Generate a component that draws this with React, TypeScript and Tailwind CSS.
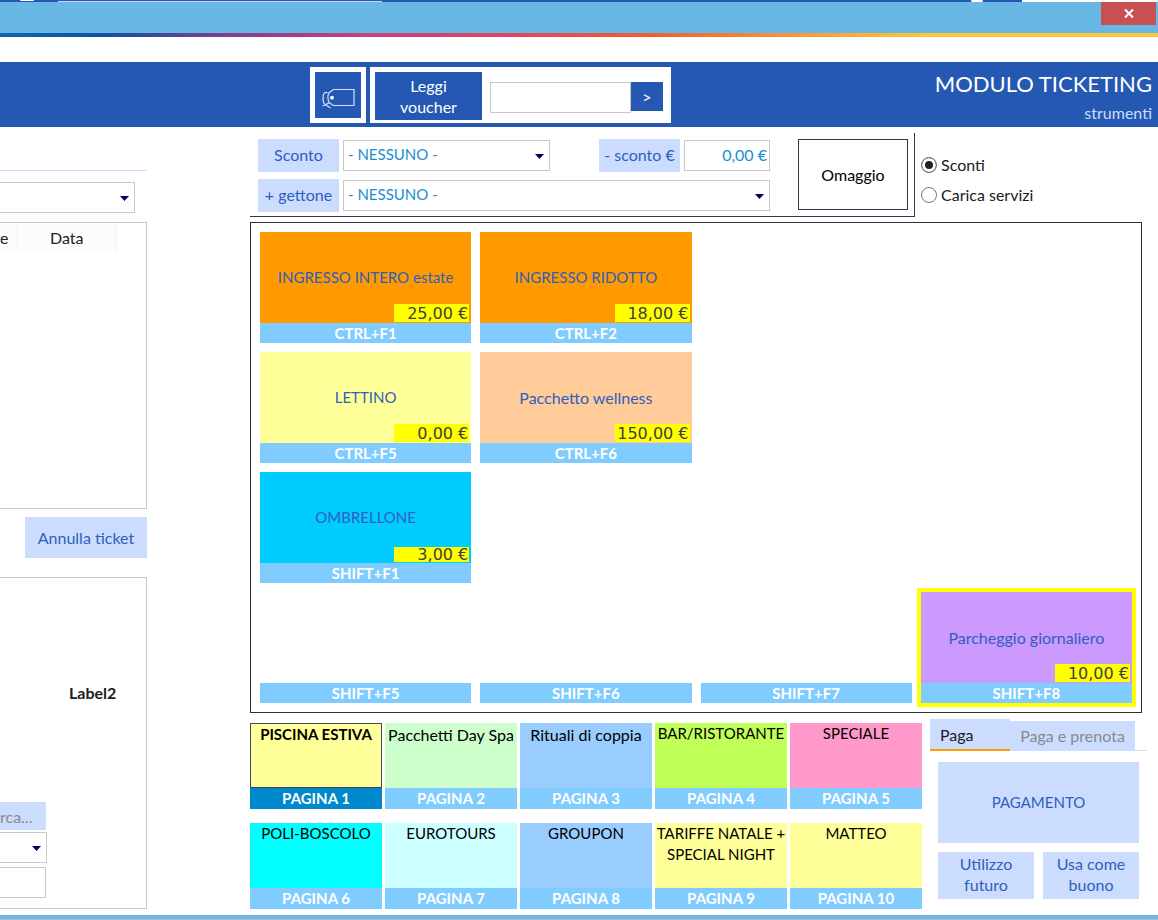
import { useState } from 'react'
import type { ReactNode } from 'react'
import clsx from 'clsx'

type Ticket = {
  shortcut: string
  name?: string
  price?: string
  color?: string
  short?: boolean
}

const tickets: (Ticket | null)[] = [
  { shortcut: 'CTRL+F1', name: 'INGRESSO INTERO estate', price: '25,00 €', color: 'bg-[#ff9900]' },
  { shortcut: 'CTRL+F2', name: 'INGRESSO RIDOTTO', price: '18,00 €', color: 'bg-[#ff9900]' },
  null,
  null,
  { shortcut: 'CTRL+F5', name: 'LETTINO', price: '0,00 €', color: 'bg-[#ffff99]' },
  { shortcut: 'CTRL+F6', name: 'Pacchetto wellness', price: '150,00 €', color: 'bg-[#ffcc99]' },
  null,
  null,
  { shortcut: 'SHIFT+F1', name: 'OMBRELLONE', price: '3,00 €', color: 'bg-[#00ccff]', short: true },
  null,
  null,
  null,
  { shortcut: 'SHIFT+F5' },
  { shortcut: 'SHIFT+F6' },
  { shortcut: 'SHIFT+F7' },
  { shortcut: 'SHIFT+F8', name: 'Parcheggio giornaliero', price: '10,00 €', color: 'bg-[#cc99ff]' },
]

const pages = [
  { name: 'PISCINA ESTIVA', color: 'bg-[#ffff99]' },
  { name: 'Pacchetti Day Spa', color: 'bg-[#ccffcc]' },
  { name: 'Rituali di coppia', color: 'bg-[#99ccff]' },
  { name: 'BAR/RISTORANTE', color: 'bg-[#c0ff58]' },
  { name: 'SPECIALE', color: 'bg-[#ff99cc]' },
  { name: 'POLI-BOSCOLO', color: 'bg-[#00ffff]' },
  { name: 'EUROTOURS', color: 'bg-[#ccffff]' },
  { name: 'GROUPON', color: 'bg-[#99ccff]' },
  { name: 'TARIFFE NATALE + SPECIAL NIGHT', color: 'bg-[#ffff99]' },
  { name: 'MATTEO', color: 'bg-[#ffff99]' },
]

// capitals run wide in Lato, so names that start with them are set one size down
const nameSize = (name: string) => (/^[A-Z]{2}/.test(name) ? 'text-[15px]' : 'text-base')

function SelectBox({ id, label, value, className }: { id: string; label?: string; value: string; className: string }) {
  return (
    <div className={clsx('relative h-[31px]', className)}>
      <select
        id={id}
        aria-label={label}
        className="w-full h-full appearance-none bg-white border border-[#c8c8c8] pl-1 pb-0.5 text-[15px] text-[#1a8fd0]"
      >
        <option>{value}</option>
      </select>
      <svg className="absolute right-1.5 top-3.5 pointer-events-none" width="9" height="5" viewBox="0 0 9 5">
        <path d="M0 0h9L4.5 5z" fill="#000060" />
      </svg>
    </div>
  )
}

function FieldLabel({ htmlFor, children }: { htmlFor: string; children: ReactNode }) {
  return (
    <label
      htmlFor={htmlFor}
      className="w-[81px] h-[33px] pb-0.5 bg-[#ccdcff] text-[#2e5fbd] flex items-center justify-center whitespace-nowrap"
    >
      {children}
    </label>
  )
}

function TicketButton({ ticket, selected, onClick }: { ticket: Ticket; selected: boolean; onClick: () => void }) {
  return (
    <button
      onClick={onClick}
      className={clsx('h-[111px] flex flex-col justify-end', selected && 'outline-4 outline-[#ffff00]')}
    >
      {ticket.name && (
        <span
          className={clsx(
            'relative w-full flex-1 flex items-center justify-center text-[#2e5fbd]',
            nameSize(ticket.name),
            ticket.color,
          )}
        >
          {ticket.name}
          <span
            className={clsx(
              'absolute right-0.5 bottom-px w-[75px] bg-[#ffff00] text-[#404040] text-right pr-px font-["DejaVu_Sans",sans-serif] text-base',
              ticket.short ? 'h-[15px] leading-[15px]' : 'h-[18px] leading-5',
            )}
          >
            {ticket.price}
          </span>
        </span>
      )}
      <span className="w-full h-5 bg-[#80ccff] text-white text-[15px] font-bold leading-5">{ticket.shortcut}</span>
    </button>
  )
}

export default function App() {
  const [selected, setSelected] = useState('SHIFT+F8')
  const [page, setPage] = useState(0)
  const [mode, setMode] = useState('sconti')
  const [tab, setTab] = useState('paga')
  const [voucher, setVoucher] = useState('')
  const [discount, setDiscount] = useState('0,00 €')

  return (
    <div className="min-h-screen flex flex-col bg-white font-[Lato,sans-serif] text-base leading-[21px] text-[#202020] overflow-hidden">
      {/* window behind */}
      <div className="h-0.5 bg-[#2558b3] flex items-end">
        <div className="ml-5 w-3.5 h-0.5 border-t border-white rounded-full" />
        <div className="ml-6 w-[324px] h-px bg-[#c9d4ee]" />
        <div className="ml-auto mr-[39px] w-3 h-0.5 bg-white rounded-full" />
        <div className="w-[136px] h-0.5 bg-white" />
      </div>

      {/* title bar */}
      <div className="h-[31px] bg-[#68b7e4] flex justify-end items-start pr-0.5">
        <button aria-label="Chiudi" className="w-[55px] h-[23px] bg-[#c75050] flex items-center justify-center">
          <svg width="10" height="9" viewBox="0 0 10 9">
            <path d="M1 0.5L9 8.5M9 0.5L1 8.5" stroke="#fff" strokeWidth="2" />
          </svg>
        </button>
      </div>
      <div className="h-1 bg-[linear-gradient(to_right,#1263b0_0%,#0d52a0_9%,#7d3f8c_19%,#c4407f_31%,#de4660_44%,#ec5f33_56%,#f5943c_68%,#fdc638_80%)]" />

      {/* module header */}
      <header className="mt-[25px] h-[65px] bg-[#2558b3] text-white flex items-start">
        <div className="flex-[310] min-w-0" />
        <button aria-label="Etichetta" className="mt-[5px] size-14 border-5 border-white flex items-center justify-center">
          <svg width="34" height="28" viewBox="0 0 34 28" fill="none" stroke="#d6e2fa" strokeWidth="1.2">
            <path d="M7.500 12L12.500 8.500H33V24.500H12.500L8.500 22" />
            <path d="M8 12C6.500 14 6.500 19.500 8.500 22" />
            <path d="M6.500 12C3.500 10 2 13 2 17C2 20 2.500 22.500 4 23.500" />
            <path d="M1.500 24.500C5 25 6 21.500 9 22M5 24L9.500 27" />
            <circle cx="11" cy="16.700" r="1.900" fill="#fff" stroke="none" />
          </svg>
        </button>
        <form
          className="mt-[5px] ml-1 w-[301px] h-14 bg-white p-[5px] flex items-start"
          onSubmit={(e) => e.preventDefault()}
        >
          <button type="button" className="w-[107px] h-12 bg-[#2558b3] px-5">
            Leggi voucher
          </button>
          <input
            aria-label="Codice voucher"
            value={voucher}
            onChange={(e) => setVoucher(e.target.value)}
            className="mt-2.5 ml-2 w-[141px] h-[31px] border border-[#c8c8c8] text-[#202020] px-1"
          />
          <button className="mt-2.5 w-8 h-[29px] bg-[#2558b3]">&gt;</button>
        </form>
        <div className="flex-[481] min-w-0 pt-2 pr-1.5 text-right">
          <h1 className="text-[22px] leading-7">MODULO TICKETING</h1>
          <a href="#strumenti" className="block mt-1 text-[#ccdcff]">strumenti</a>
        </div>
      </header>

      <div className="flex-1 flex pb-1.5">
        {/* ticket list */}
        <aside className="w-[147px] flex-none flex flex-col">
          <div className="h-11 border-b border-[#ccdcff]" />
          <SelectBox id="listino" label="Listino" value="" className="mt-[11px] w-[136px] -ml-px" />
          <div className="mt-[9px] h-[287px] border border-l-0 border-[#c8c8c8]">
            <table className="mt-px w-[117px] table-fixed">
              <thead>
                <tr className="h-[27px] bg-[#fcfcfc]">
                  <th className="w-[17px] p-0 text-left font-normal border-r border-[#fdf0e0]">e</th>
                  <th className="p-0 font-normal border-r border-[#fdf0e0]">Data</th>
                </tr>
              </thead>
            </table>
          </div>
          <button className="mt-2 w-[122px] h-[41px] self-end bg-[#ccdcff] text-[#2e5fbd]">Annulla ticket</button>
          <div className="mt-[19px] h-[332px] border border-l-0 border-[#c8c8c8] flex flex-col">
            <div className="mt-[104px] ml-[69px] font-bold">Label2</div>
            <button className="mt-auto w-[46px] h-7 bg-[#ccdcff] text-[#8a8a8a] text-left">rca...</button>
            <SelectBox id="cliente" label="Cliente" value="" className="mt-0.5 w-12 -ml-px" />
            <input aria-label="Codice" className="mt-1 mb-2.5 -ml-px w-[47px] h-[31px] border border-[#c8c8c8]" />
          </div>
        </aside>

        <main className="flex-1 min-w-0 ml-[103px] mr-[11px] pt-1.5">
          {/* discounts */}
          <div className="flex">
            <div className="w-[665px] h-[84px] flex-none border-r border-b border-[#2b3a4d] pt-1.5 pl-2 pr-1.5 flex justify-between">
              <div className="w-[512px] flex flex-col gap-[7px]">
                <div className="flex items-start">
                  <FieldLabel htmlFor="sconto">Sconto</FieldLabel>
                  <SelectBox id="sconto" value="- NESSUNO -" className="ml-1 mt-px w-[207px]" />
                  <div className="ml-auto">
                    <FieldLabel htmlFor="scontoEuro">- sconto €</FieldLabel>
                  </div>
                  <input
                    id="scontoEuro"
                    value={discount}
                    onChange={(e) => setDiscount(e.target.value)}
                    className="ml-1 mt-px w-[86px] h-[31px] border border-[#c8c8c8] pr-0.5 pb-0.5 text-right text-[#1a8fd0]"
                  />
                </div>
                <div className="flex items-start">
                  <FieldLabel htmlFor="gettone">+ gettone</FieldLabel>
                  <SelectBox id="gettone" value="- NESSUNO -" className="ml-1 mt-px flex-1" />
                </div>
              </div>
              <button className="w-[110px] h-[71px] border border-[#2b3a4d] text-black">Omaggio</button>
            </div>
            <div className="pt-[21px] pl-1.5 flex flex-col gap-[9px]">
              {[
                ['sconti', 'Sconti'],
                ['servizi', 'Carica servizi'],
              ].map(([value, label]) => (
                <label key={value} className="flex items-center gap-1">
                  <input
                    type="radio"
                    name="mode"
                    checked={mode === value}
                    onChange={() => setMode(value)}
                    className="appearance-none size-4 rounded-full border border-[#777] bg-white checked:bg-[#222] checked:shadow-[inset_0_0_0_3px_white]"
                  />
                  {label}
                </label>
              ))}
            </div>
          </div>

          {/* tickets */}
          <div className="mt-[5px] mr-[5px] border border-[#303030] p-[9px] grid grid-cols-4 gap-[9px]">
            {tickets.map((t, i) =>
              t ? (
                <TicketButton
                  key={t.shortcut}
                  ticket={t}
                  selected={selected === t.shortcut}
                  onClick={() => setSelected(t.shortcut)}
                />
              ) : (
                <div key={i} className="h-[111px]" />
              ),
            )}
          </div>

          <div className="flex">
            {/* pages */}
            <div className="flex-1 mt-2.5 grid grid-cols-5 gap-x-[3px] gap-y-3.5">
              {pages.map((p, i) => (
                <button key={p.name} onClick={() => setPage(i)} className="h-[86px] flex flex-col text-black">
                  <span
                    className={clsx(
                      'flex-1 w-full',
                      nameSize(p.name),
                      p.color,
                      page === i && 'border border-[#404858] font-bold',
                    )}
                  >
                    {p.name}
                  </span>
                  <span
                    className={clsx(
                      'h-[21px] w-full text-white text-[15px] font-bold',
                      page === i ? 'bg-[#0088cc]' : 'bg-[#80ccff]',
                    )}
                  >
                    PAGINA {i + 1}
                  </span>
                </button>
              ))}
            </div>

            {/* payment */}
            <div className="w-[217px] flex-none ml-2 mt-1.5">
              <div className="flex items-end h-8 border-b border-[#ccdcff]">
                <button
                  onClick={() => setTab('paga')}
                  className={clsx(
                    'w-20 pl-2.5 text-left bg-[#ccdcff] -mb-px',
                    tab === 'paga' ? 'h-8 border-b-2 border-[#ff9900]' : 'h-[29px] text-[#8a8a8a]',
                  )}
                >
                  Paga
                </button>
                <button
                  onClick={() => setTab('prenota')}
                  className={clsx(
                    'w-[125px] bg-[#ccdcff]',
                    tab === 'prenota' ? 'h-[31px] border-b-2 border-[#ff9900]' : 'h-[29px] text-[#8a8a8a]',
                  )}
                >
                  Paga e prenota
                </button>
              </div>
              <div className="mt-[11px] ml-2 mr-2 grid grid-cols-2 gap-[9px] text-[#2e5fbd]">
                <button className="col-span-2 h-[81px] bg-[#ccdcff] text-[15px]">PAGAMENTO</button>
                <button className="h-[47px] px-4 pb-1 bg-[#ccdcff]">Utilizzo futuro</button>
                <button className="h-[47px] px-2 pb-1 bg-[#ccdcff]">Usa come buono</button>
              </div>
            </div>
          </div>
        </main>
      </div>

      <div className="h-1 bg-[#68b7e4]" />
      <div className="h-px bg-[#b8b8b8]" />
    </div>
  )
}
